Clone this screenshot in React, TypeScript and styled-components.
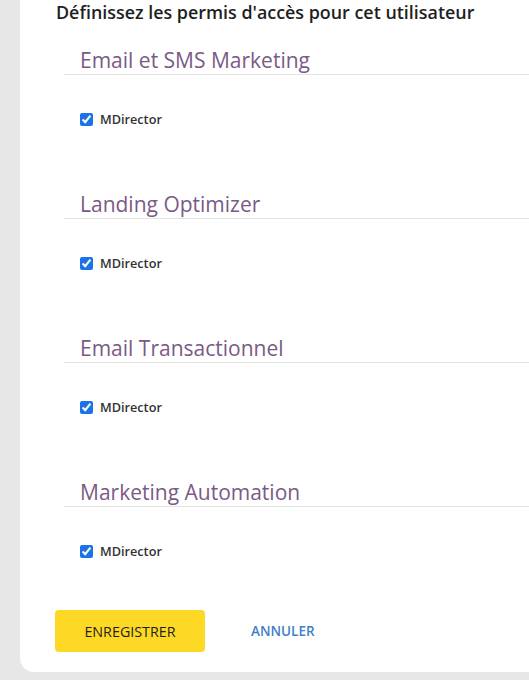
import React from "react";
import styled, { createGlobalStyle } from "styled-components";

const Global = createGlobalStyle`
  html, body { margin: 0; padding: 0; background: #e7e7e7; }
  body { font-family: "Open Sans", "Noto Sans", sans-serif; }
`;

const Page = styled.div`
  padding: 0 0 8px 20px;
  height: 680px;
  box-sizing: border-box;
  overflow: hidden;
`;

const Card = styled.div`
  background: #ffffff;
  border-radius: 0 0 0 14px;
  padding: 0 0 20px 36px;
`;

const Title = styled.h2`
  margin: 0;
  font-size: 17.9px;
  line-height: 24px;
  font-weight: 600;
  color: #1f1f1f;
`;

const Section = styled.section`
  margin-left: 8px;
  margin-top: 22px;
  & + & { margin-top: 61px; }
`;

const SectionHeader = styled.h3`
  margin: 0;
  padding-left: 16px;
  font-size: 21px;
  line-height: 28px;
  font-weight: 400;
  color: #7a5a85;
  border-bottom: 1px solid #e2e2e2;
`;

const CheckRow = styled.label`
  display: flex;
  align-items: center;
  gap: 7px;
  margin-top: 34px;
  height: 20px;
  padding-left: 16px;
  font-size: 12.7px;
  font-weight: 600;
  color: #333333;
`;

const Check = styled.input`
  margin: 0;
  width: 13px;
  height: 13px;
  accent-color: #1a73e8;
`;

const Actions = styled.div`
  display: flex;
  align-items: center;
  gap: 30px;
  margin-top: 49px;
  margin-left: -1px;
`;

const SaveButton = styled.button`
  width: 150px;
  height: 42px;
  border: none;
  border-radius: 4px;
  background: #fdd925;
  font-family: inherit;
  font-size: 14.3px;
  color: #1e1e1e;
  cursor: pointer;
`;

const CancelButton = styled.button`
  border: none;
  background: none;
  padding: 0 16px;
  font-family: inherit;
  font-size: 13.5px;
  font-weight: 600;
  color: #3f7fc6;
  cursor: pointer;
`;

const sections = [
  "Email et SMS Marketing",
  "Landing Optimizer",
  "Email Transactionnel",
  "Marketing Automation",
];

export default function App() {
  return (
    <>
      <Global />
      <Page>
        <Card>
          <Title>Définissez les permis d'accès pour cet utilisateur</Title>
          {sections.map((s) => (
            <Section key={s}>
              <SectionHeader>{s}</SectionHeader>
              <CheckRow>
                <Check type="checkbox" defaultChecked />
                MDirector
              </CheckRow>
            </Section>
          ))}
          <Actions>
            <SaveButton>ENREGISTRER</SaveButton>
            <CancelButton>ANNULER</CancelButton>
          </Actions>
        </Card>
      </Page>
    </>
  );
}
